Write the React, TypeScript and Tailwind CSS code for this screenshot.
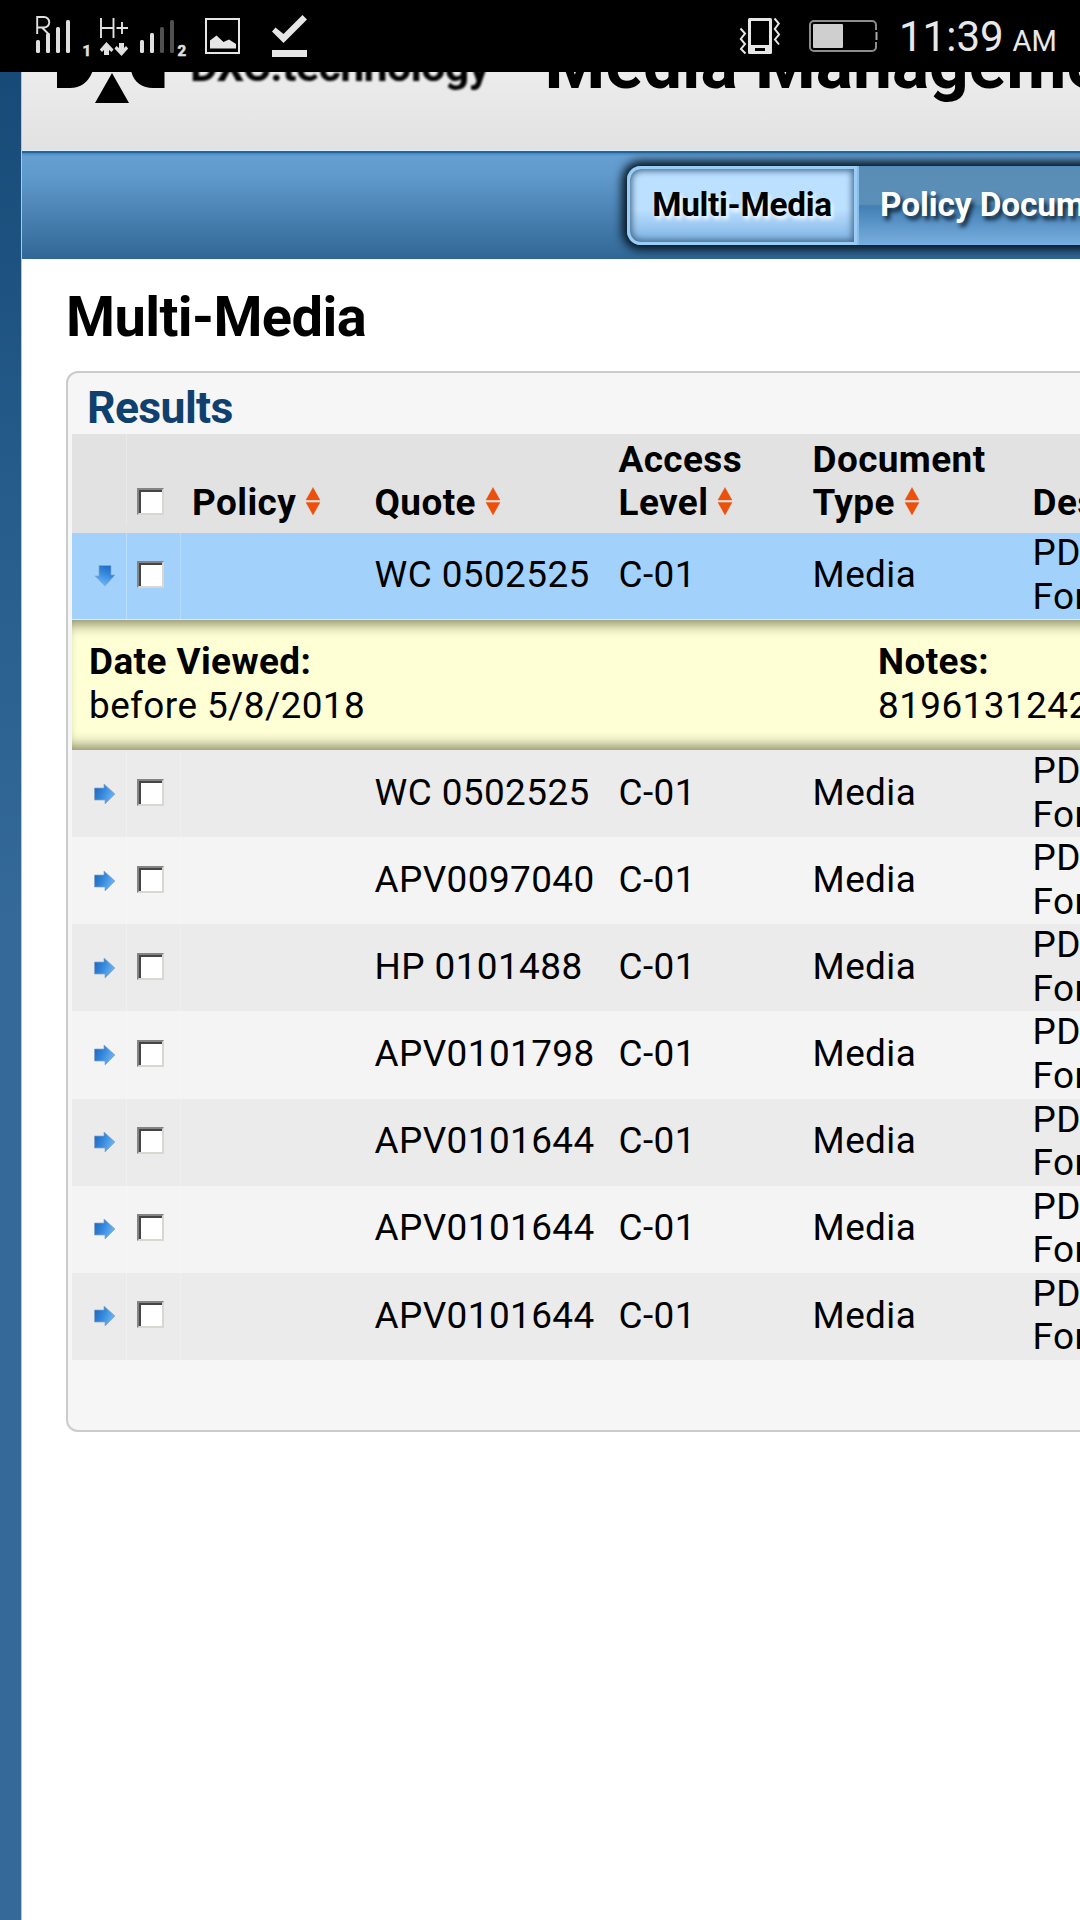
import React from "react";

const quotes = ["WC 0502525", "APV0097040", "HP 0101488", "APV0101798", "APV0101644", "APV0101644", "APV0101644"];

const GRID = "grid grid-cols-[54px_54px_183px_244px_195px_219px_300px] w-[1249px]";

function PrimarySignal() {
  return (
    <svg width="62" height="72" viewBox="30 0 62 72" fill="#e0e0e0">
      <path d="M37.2 34V17H44a4.6 4.6 0 0 1 0 10.500H37.200M42 27.500L49.500 35" fill="none" stroke="#e0e0e0" strokeWidth="1.900" />
      <rect x="36" y="40" width="4" height="13" rx="1.500" />
      <rect x="46" y="33" width="4" height="20" rx="1.500" />
      <rect x="56" y="27" width="4" height="26" rx="1.500" />
      <rect x="66" y="20" width="4" height="33" rx="1.500" />
      <text x="82.500" y="55.500" fontFamily="Roboto" fontWeight="700" fontSize="15" stroke="#e0e0e0" strokeWidth="0.600">1</text>
    </svg>
  );
}

function SecondarySignal() {
  return (
    <svg width="98" height="72" viewBox="92 0 98 72" fill="#e0e0e0">
      <path d="M101 18V38M113.500 18V38M101 28H113.500M116.500 28H128M122 22V34" fill="none" stroke="#e0e0e0" strokeWidth="1.900" />
      <path d="M106.500 42L113.500 49.500L111.500 52L109 50V55H104V50L102 52L99.800 49.500Z" />
      <path d="M121.500 56L114.500 48.500L116.500 46L119 48V43H124V48L126 46L128.200 48.500Z" />
      <rect x="140" y="40" width="4" height="13" rx="1.500" />
      <rect x="150" y="33" width="4" height="20" rx="1.500" />
      <rect x="160" y="27" width="4" height="26" rx="1.500" fill="#505050" />
      <rect x="170" y="20" width="4" height="33" rx="1.500" fill="#505050" />
      <text x="177.500" y="55.500" fontFamily="Roboto" fontWeight="700" fontSize="15" stroke="#e0e0e0" strokeWidth="0.600">2</text>
    </svg>
  );
}

function Notices() {
  return (
    <svg width="130" height="72" viewBox="190 0 130 72" fill="#e6e6e6">
      <rect x="206" y="19" width="33" height="34" fill="none" stroke="#e6e6e6" strokeWidth="2" />
      <path d="M210 48.500V40.500L216.500 35.500L223.500 42L229 39.500L236 44V48.500Z" />
      <path d="M272 31.500L275.500 27.500L283.500 34L302.500 15L307 19.500L283.500 43Z" />
      <rect x="272" y="50" width="35" height="7" />
    </svg>
  );
}

function DeviceStatus() {
  return (
    <svg width="154" height="72" viewBox="730 0 154 72">
      <path fill="#e6e6e6" fillRule="evenodd" d="M749.500 18H770.500Q772 18 772 19.500V52.500Q772 54 770.500 54H749.500Q748 54 748 52.500V19.500Q748 18 749.500 18ZM751 21V45H769V21ZM755 48V51H765V48Z" />
      <path fill="none" stroke="#e6e6e6" strokeWidth="2" d="M774.500 18.500L778.800 23.500L774.800 29L779 34.500L775 39.500L779 44.500M740.500 28.500L745 33.500L740.800 39L745 44L741 49L745.500 53.500" />
      <rect x="810" y="21" width="66" height="30" rx="4" fill="none" stroke="#8d8d8d" strokeWidth="2" />
      <rect x="874" y="30" width="4" height="12" fill="#000" />
      <rect x="875.500" y="32" width="2" height="8" fill="#aaa" />
      <rect x="813" y="24" width="30" height="24" rx="1" fill="#cfcfcf" />
    </svg>
  );
}

function Sort() {
  return (
    <svg width="16" height="29" viewBox="0 0 16 29" className="ml-[9px] inline-block align-[-1px]" fill="#eb500c">
      <path d="M8 0.500L15 13H1ZM1 15.500H15L8 28Z" stroke="#eb500c" strokeOpacity="0.350" />
    </svg>
  );
}

function Arrow({ down = false }: { down?: boolean }) {
  return (
    <svg width="24" height="24" viewBox="0 0 24 24" className={down ? "ml-[21px] -translate-y-px rotate-90" : "ml-[21px]"}>
      <defs>
        <linearGradient id="arrowBlue" x1="0" y1="0" x2="1" y2="0.400">
          <stop offset="0" stopColor="#1764b8" />
          <stop offset="0.500" stopColor="#3587dc" />
          <stop offset="1" stopColor="#68b2f5" />
        </linearGradient>
      </defs>
      <path d="M1.500 6H11V2L22 12L12 22V18H1.500Z" fill="url(#arrowBlue)" stroke="#87a5c4" strokeOpacity="0.700" strokeWidth="1" />
    </svg>
  );
}

function Check() {
  return (
    <span className="ml-[10px] block h-[27px] w-[27px] border-2 border-t-[#848484] border-l-[#848484] border-r-[#d9d7d0] border-b-[#d9d7d0]">
      <span className="block h-full w-full border-t-2 border-l-2 border-[#454545] bg-white" />
    </span>
  );
}

function Row({ quote, tone, open = false }: { quote: string; tone: string; open?: boolean }) {
  const text = open ? "-translate-y-[2px]" : "-translate-y-[1px]";
  return (
    <div className={`${GRID} ${tone} items-center`}>
      <Arrow down={open} />
      <div className={open ? "flex h-full items-center border-l border-white/25 pb-[5px]" : "flex h-full items-center border-l border-white/25 pb-[3px]"}><Check /></div>
      <div className="h-full border-l border-white/20" />
      <div className={`${text} pl-[11.500px]`}>{quote}</div>
      <div className={`${text} pl-[11.500px]`}>C-01</div>
      <div className={`${text} pl-[10.500px]`}>Media</div>
      <div className={`${text} pl-[11.500px]`}>PDF<br />Form</div>
    </div>
  );
}

export default function App() {
  return (
    <div className="flex h-[1920px] w-[1080px] flex-col overflow-hidden bg-white font-[Roboto,sans-serif] text-[36.900px] leading-[43.600px] text-black">
      <div className="flex h-[72px] shrink-0 items-center bg-black text-[#e8e8e8]">
        <div className="ml-[30px] flex"><PrimarySignal /><SecondarySignal /><Notices /></div>
        <div className="ml-[410px] flex"><DeviceStatus /></div>
        <div className="ml-[15px] mt-[7px] flex items-baseline whitespace-nowrap">
          <span className="text-[42px]">11:39</span>
          <span className="ml-[9px] text-[29px]">AM</span>
        </div>
      </div>

      <div className="flex min-h-0 flex-1">
        <div className="w-[22px] shrink-0 border-r border-[#a9c9dd] bg-[linear-gradient(#174a77_0px,#265d8c_440px,#346999_850px)]" />
        <div className="flex w-[1058px] flex-col overflow-hidden">
          <div className="flex h-[79px] shrink-0 overflow-hidden border-b border-[#d9effb] bg-linear-to-b from-[#ececec] to-[#e2e2e2]">
            <svg width="110" height="34" viewBox="56 72 110 34" className="ml-[34px] shrink-0 blur-[0.700px]">
              <path d="M57 66V88H70C81 88 89 82 93 70V66ZM164.500 66V88H153C142 88 133 82 131 70V66ZM112 73L129 103H95Z" />
            </svg>
            <div className="ml-[24px] -mt-[27px] w-[300px] text-[43px] font-bold tracking-[-0.700px] blur-[1px]">DXC.technology</div>
            <div className="ml-[55px] -mt-[42px] whitespace-nowrap text-[69.500px] leading-[70px] font-bold">Media Management</div>
          </div>

          <div className="flex h-[108px] shrink-0 overflow-hidden border-t-2 border-[#276396] bg-[linear-gradient(#4286c0_0px,#659ed0_3px,#609acc_22px,#306796_106px)]">
            <div className="mt-[13px] ml-[605px] flex h-[79px] w-[700px] shrink-0 rounded-l-[14px] bg-[linear-gradient(#518bbb_0px,#598db6_3px,#5b8fb7_38px,#437fb3_40px,#78afe0_79px)] shadow-[0_0_10px_5px_#061521] text-[33.400px] font-bold tracking-[-0.300px]">
              <div className="flex w-[230px] items-center justify-center rounded-l-[14px] border-[3px] border-[#9bcdf6] bg-[linear-gradient(#bce0ff_0%,#bce0ff_55%,#7eb2e4_100%)] pb-0.5 shadow-[inset_0_0_6px_2px_#456b8c] [text-shadow:2px_3px_4px_#fff]">Multi-Media</div>
              <div className="flex items-center border-l-2 border-[#8abce8] pb-0.5 pl-[21px] tracking-[-0.100px] whitespace-nowrap text-white [text-shadow:3px_4px_4px_#102538]">Policy Documents</div>
            </div>
          </div>

          <h1 className="mt-[25px] ml-[44px] text-[56px] leading-[66px] font-bold tracking-[-0.600px]">Multi-Media</h1>

          <div className="mt-[21px] ml-[44px] h-[1061px] w-[1300px] shrink-0 rounded-[12px] border-[2.500px] border-[#cbcbcb] bg-[#f6f6f6] pl-[4px]">
            <h2 className="flex h-[61px] items-center pt-[11px] pl-[15px] text-[44.500px] font-bold tracking-[-0.600px] text-[#10416e]">Results</h2>
            <div className="tracking-[0.420px]">
              <div className={`${GRID} h-[99px] items-end bg-[#e2e2e2] pb-2 font-bold`}>
                <div />
                <div className="flex h-full items-end border-l border-white/25 pb-[10px]"><Check /></div>
                <div className="pl-[12px]">Policy<Sort /></div>
                <div className="pl-[11.500px]">Quote<Sort /></div>
                <div className="pl-[11.500px]">Access<br />Level<Sort /></div>
                <div className="pl-[10.500px]">Document<br />Type<Sort /></div>
                <div className="pl-[11.500px]">Description</div>
              </div>
              <Row quote="WC 0502525" tone="h-[87px] bg-[#a2d2fc] border-b border-[#dceaf4]" open />
              <div className="flex h-[130px] w-[1249px] bg-[#feffd5] pt-5 pl-[17px] shadow-[inset_0_14px_14px_-10px_#83845f,inset_0_-14px_14px_-10px_#83845f]">
                <div className="w-[789px]"><b>Date Viewed:</b><br />before 5/8/2018</div>
                <div><b>Notes:</b><br />8196131242</div>
              </div>
              {quotes.map((q, i) => (
                <Row key={i} quote={q} tone={i % 2 ? "h-[87.140px] bg-[#f4f4f4]" : "h-[87.140px] bg-[#ebebeb]"} />
              ))}
            </div>
          </div>
        </div>
      </div>
    </div>
  );
}
